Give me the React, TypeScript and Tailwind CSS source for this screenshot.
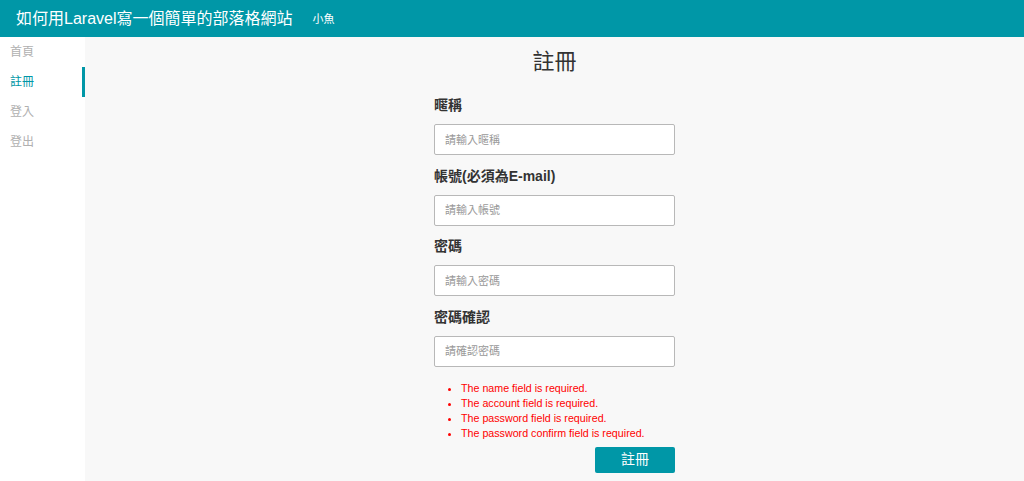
import React from 'react';

const font = { fontFamily: '"Liberation Sans", "Noto Sans CJK TC", sans-serif' };

const navItems = [
  { label: '首頁', active: false },
  { label: '註冊', active: true },
  { label: '登入', active: false },
  { label: '登出', active: false },
];

const fields = [
  { label: '暱稱', placeholder: '請輸入暱稱' },
  { label: '帳號(必須為E-mail)', placeholder: '請輸入帳號' },
  { label: '密碼', placeholder: '請輸入密碼' },
  { label: '密碼確認', placeholder: '請確認密碼' },
];

const errors = [
  'The name field is required.',
  'The account field is required.',
  'The password field is required.',
  'The password confirm field is required.',
];

const App: React.FC = () => {
  return (
    <div className="w-[1024px] h-[481px] flex flex-col overflow-hidden bg-[#f8f8f8]" style={font}>
      <header className="h-[37px] shrink-0 bg-[#0097a7] flex items-center pl-4">
        <h1 className="text-white text-[16px] leading-none">如何用Laravel寫一個簡單的部落格網站</h1>
        <span className="text-white text-[11px] ml-5 mt-[2px]">小魚</span>
      </header>

      <div className="flex flex-1 min-h-0">
        <aside className="w-[85px] shrink-0 bg-white">
          {navItems.map((item) => (
            <div
              key={item.label}
              className={`h-[30px] flex items-center pl-[10px] text-[12px] border-r-[3px] ${
                item.active ? 'text-[#0097a7] border-[#0097a7]' : 'text-[#b0b0b0] border-transparent'
              }`}
            >
              {item.label}
            </div>
          ))}
        </aside>

        <main className="flex-1 flex flex-col items-center pt-[10px]">
          <h2 className="text-[22px] leading-[30px] text-[#333]">註冊</h2>

          <form className="w-[241px] mt-[18px]">
            {fields.map((f) => (
              <div key={f.label} className="mb-[10.6px]">
                <label className="block h-[20px] leading-[20px] text-[14px] font-bold text-[#333]">{f.label}</label>
                <input
                  type="text"
                  placeholder={f.placeholder}
                  className="mt-[9px] w-full h-[31px] bg-white border border-[#b8b8b8] rounded-[2px] px-[10px] text-[11px] placeholder:text-[#999] outline-none"
                  style={font}
                />
              </div>
            ))}

            <ul className="mt-[14px] pl-[27px] list-disc text-[#ff0000] text-[10.7px] leading-[15px] marker:text-[#ff0000]">
              {errors.map((e) => (
                <li key={e}>{e}</li>
              ))}
            </ul>

            <div className="flex justify-end mt-[6px]">
              <button
                type="button"
                className="w-[80px] h-[26px] rounded-[2px] bg-[#0097a7] text-white text-[14px]"
                style={font}
              >
                註冊
              </button>
            </div>
          </form>
        </main>
      </div>
    </div>
  );
};

export default App;
